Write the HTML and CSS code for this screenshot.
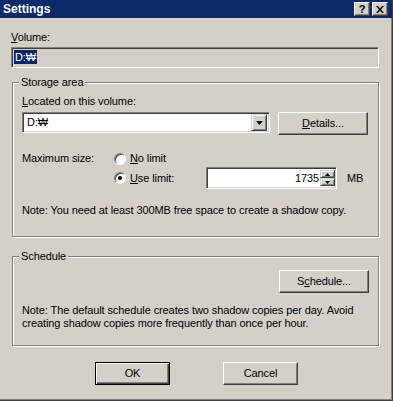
FILE: index.html
```
<!DOCTYPE html>
<html lang="en">
<head>
    <meta charset="UTF-8">
    <meta name="viewport" content="width=device-width, initial-scale=1.0">
    <title>Settings</title>
    <link rel="stylesheet" href="styles.css">
</head>
<body>
  <div class="window">
    <div class="titlebar">
      <span class="title">Settings</span>
      <div class="caption-btns">
        <span class="cap-btn help">?</span>
        <span class="cap-btn">
          <svg width="8" height="7" viewBox="0 0 8 7"><path d="M0 0h2l2 2.5L6 0h2L5 3.5 8 7H6L4 4.5 2 7H0l3-3.5z" fill="#000"/></svg>
        </span>
      </div>
    </div>

    <div class="content">
      <div class="label"><u>V</u>olume:</div>
      <div class="field disabled"><span class="sel">D:₩</span></div>

      <fieldset class="group storage">
        <legend>Storage area</legend>
        <div class="label"><u>L</u>ocated on this volume:</div>
        <div class="combo-row">
          <div class="field combo">
            <span>D:₩</span>
            <span class="drop">
              <svg width="7" height="4" viewBox="0 0 7 4"><path d="M0 0h7L3.5 4z" fill="#000"/></svg>
            </span>
          </div>
          <div class="btn details"><u>D</u>etails...</div>
        </div>

        <div class="size">
          <span class="size-label">Maximum size:</span>
          <div class="size-opts">
            <div class="radio-row">
              <span class="radio"></span><span><u>N</u>o limit</span>
            </div>
            <div class="radio-row limit">
              <span class="radio checked"></span><span class="limit-text"><u>U</u>se limit:</span>
              <div class="field spin">
                <span class="spin-val">1735</span>
                <span class="spin-btns">
                  <span class="spin-btn"><svg width="5" height="3" viewBox="0 0 5 3"><path d="M0 3h5L2.5 0z" fill="#000"/></svg></span>
                  <span class="spin-btn"><svg width="5" height="3" viewBox="0 0 5 3"><path d="M0 0h5L2.5 3z" fill="#000"/></svg></span>
                </span>
              </div>
              <span class="unit">MB</span>
            </div>
          </div>
        </div>

        <p class="note">Note: You need at least 300MB free space to create a shadow copy.</p>
      </fieldset>

      <fieldset class="group schedule">
        <legend>Schedule</legend>
        <div class="sched-row">
          <div class="btn">S<u>c</u>hedule...</div>
        </div>
        <p class="note">Note: The default schedule creates two shadow copies per day. Avoid creating shadow copies more frequently than once per hour.</p>
      </fieldset>

      <div class="actions">
        <div class="btn default">OK</div>
        <div class="btn">Cancel</div>
      </div>
    </div>
  </div>
</body>
</html>
```

FILE: styles.css
```
* {
  box-sizing: border-box;
}

body {
  margin: 0;
  font: 11px/13px "Liberation Sans", Arial, sans-serif;
  letter-spacing: -0.1px;
  color: #000;
  background: #d4d0c8;
}

.window {
  width: 393px;
  height: 401px;
  background: #d4d0c8;
  border-right: 1px solid #404040;
  border-bottom: 1px solid #404040;
  box-shadow: inset -1px -1px #808080;
  display: flex;
  flex-direction: column;
}

.titlebar {
  height: 18px;
  background: #0a2a6a;
  display: flex;
  align-items: center;
  justify-content: space-between;
  padding: 0 4px 0 3px;
}
.title {
  color: #fff;
  font-weight: bold;
  font-size: 12px;
  letter-spacing: 0;
}
.caption-btns {
  display: flex;
  gap: 2px;
}
.cap-btn {
  width: 16px;
  height: 14px;
  display: flex;
  align-items: center;
  justify-content: center;
  background: #d4d0c8;
  border: 1px solid;
  border-color: #fff #404040 #404040 #fff;
  box-shadow: inset -1px -1px #808080;
}
.cap-btn.help {
  font-weight: bold;
  font-size: 11px;
}

.content {
  padding: 13px 10px 0 11px;
  display: flex;
  flex-direction: column;
}

u {
  text-decoration-thickness: 1px;
  text-underline-offset: 1px;
}

.field {
  background: #fff;
  border: 1px solid;
  border-color: #808080 #fff #fff #808080;
  box-shadow: inset 1px 1px #404040, inset -1px -1px #d4d0c8;
}
.field.disabled {
  background: #d4d0c8;
  height: 21px;
  width: 368px;
  margin-top: 3px;
  padding: 2px 0 0 2px;
}
.sel {
  display: inline-block;
  background: #0a246a;
  color: #fff;
  padding: 0 1px;
  line-height: 14px;
}

.group {
  margin: 0;
  border: 1px solid #808080;
  box-shadow: inset 1px 1px #fff, 1px 1px 0 #fff;
  width: 367px;
  margin-left: 1px;
}
.group legend {
  padding: 0 2px;
  margin-left: -3px;
  background: #d4d0c8;
  line-height: 13px;
}

.storage {
  margin-top: 8px;
  padding: 6px 9px 19px 9px;
}

.combo-row {
  display: flex;
  align-items: flex-start;
  gap: 8px;
  margin-top: 4px;
}
.combo {
  width: 248px;
  height: 21px;
  display: flex;
  align-items: center;
  justify-content: space-between;
  padding: 0 2px 0 4px;
}
.drop {
  width: 16px;
  height: 17px;
  display: flex;
  align-items: center;
  justify-content: center;
  background: #d4d0c8;
  border: 1px solid;
  border-color: #d4d0c8 #404040 #404040 #d4d0c8;
  box-shadow: inset 1px 1px #fff, inset -1px -1px #808080;
}

.btn {
  width: 90px;
  height: 23px;
  display: flex;
  align-items: center;
  justify-content: center;
  background: #d4d0c8;
  border: 1px solid;
  border-color: #fff #404040 #404040 #fff;
  box-shadow: inset -1px -1px #808080;
}

.size {
  display: flex;
  margin-top: 17px;
}
.size-label {
  width: 92px;
}
.size-opts {
  display: flex;
  flex-direction: column;
}
.radio-row {
  display: flex;
  align-items: center;
  gap: 4px;
  height: 13px;
}
.radio-row.limit {
  height: 22px;
  margin-top: 2px;
}
.radio {
  width: 12px;
  height: 12px;
  border-radius: 50%;
  background: #fff;
  border: 1px solid;
  border-color: #808080 #fff #fff #808080;
  box-shadow: inset 1px 1px #404040;
  display: flex;
  align-items: center;
  justify-content: center;
}
.radio.checked::after {
  content: "";
  width: 4px;
  height: 4px;
  border-radius: 50%;
  background: #000;
}
.limit-text {
  width: 72px;
}
.spin {
  width: 131px;
  height: 22px;
  display: flex;
  align-items: center;
  justify-content: flex-end;
  padding: 2px 1px 2px 2px;
}
.spin-val {
  padding-right: 1px;
}
.spin-btns {
  display: flex;
  flex-direction: column;
  height: 100%;
}
.spin-btn {
  width: 15px;
  flex: 1;
  display: flex;
  align-items: center;
  justify-content: center;
  background: #d4d0c8;
  border: 1px solid;
  border-color: #d4d0c8 #404040 #404040 #d4d0c8;
  box-shadow: inset 1px 1px #fff, inset -1px -1px #808080;
}
.unit {
  margin-left: 6px;
}

.note {
  margin: 15px 0 0;
}

.schedule {
  margin-top: 13px;
  padding: 7px 9px 15px 9px;
}
.sched-row {
  display: flex;
  justify-content: flex-end;
}
.schedule .note {
  margin-top: 11px;
}

.actions {
  display: flex;
  justify-content: center;
  gap: 53px;
  margin-top: 16px;
}
.actions .btn {
  width: 75px;
}
.btn.default {
  border: 1px solid #000;
  box-shadow: inset 1px 1px #fff, inset -1px -1px #404040, inset -2px -2px #808080;
}
```
